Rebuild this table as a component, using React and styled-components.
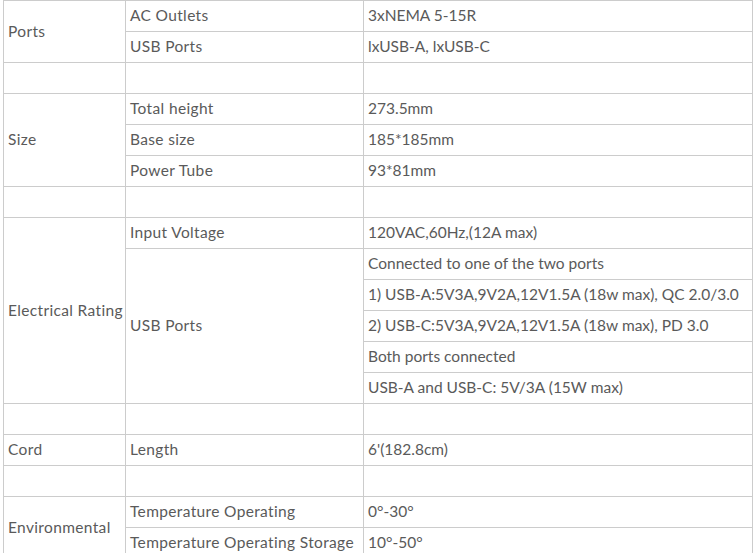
import React from 'react'
import styled, { createGlobalStyle } from 'styled-components'

const GlobalStyle = createGlobalStyle`
    body {
        margin: 0;
        background: #ffffff;
        font-family: Lato, "Open Sans", sans-serif;
    }
`;

const Page = styled.div`
    padding: 0 0 0 3px;
`;

const SpecTable = styled.table`
    width: 750px;
    border-collapse: collapse;
    table-layout: fixed;
    color: #5a5a5a;
    font-size: 15.5px;
`;

const Row = styled.tr`
    height: 31px;
`;

const Cell = styled.td`
    border: 1px solid #cccccc;
    padding: 0 4px 2px;
    vertical-align: middle;
    white-space: nowrap;
    line-height: 20px;
    letter-spacing: ${(p) => (p.$label ? '0.35px' : '0')};
`;

const specs = [
    {
        group: 'Ports',
        rows: [
            { label: 'AC Outlets', values: ['3xNEMA 5-15R'] },
            { label: 'USB Ports', values: ['lxUSB-A, lxUSB-C'] },
        ],
    },
    {
        group: 'Size',
        rows: [
            { label: 'Total height', values: ['273.5mm'] },
            { label: 'Base size', values: ['185*185mm'] },
            { label: 'Power Tube', values: ['93*81mm'] },
        ],
    },
    {
        group: 'Electrical Rating',
        rows: [
            { label: 'Input Voltage', values: ['120VAC,60Hz,(12A max)'] },
            {
                label: 'USB Ports',
                values: [
                    'Connected to one of the two ports',
                    '1) USB-A:5V3A,9V2A,12V1.5A (18w max), QC 2.0/3.0',
                    '2) USB-C:5V3A,9V2A,12V1.5A (18w max), PD 3.0',
                    'Both ports connected',
                    'USB-A and USB-C: 5V/3A (15W max)',
                ],
            },
        ],
    },
    {
        group: 'Cord',
        rows: [{ label: 'Length', values: ['6\'(182.8cm)'] }],
    },
    {
        group: 'Environmental',
        rows: [
            { label: 'Temperature Operating', values: ['0°-30°'] },
            { label: 'Temperature Operating Storage', values: ['10°-50°'] },
        ],
    },
];

function renderGroup(spec, index) {
    const span = spec.rows.reduce((n, r) => n + r.values.length, 0);
    const lines = [];
    spec.rows.forEach((row, ri) => {
        row.values.forEach((value, vi) => {
            lines.push(
                <Row key={`${index}-${ri}-${vi}`}>
                    {ri === 0 && vi === 0 && <Cell $label rowSpan={span}>{spec.group}</Cell>}
                    {vi === 0 && <Cell $label rowSpan={row.values.length}>{row.label}</Cell>}
                    <Cell>{value}</Cell>
                </Row>
            );
        });
    });
    return lines;
}

export default function App() {
    return (
        <Page>
            <GlobalStyle />
            <SpecTable>
                <colgroup>
                    <col style={{ width: '122px' }} />
                    <col style={{ width: '238px' }} />
                    <col />
                </colgroup>
                <tbody>
                    {specs.map((spec, i) => (
                        <React.Fragment key={spec.group}>
                            {i > 0 && (
                                <Row>
                                    <Cell />
                                    <Cell />
                                    <Cell />
                                </Row>
                            )}
                            {renderGroup(spec, i)}
                        </React.Fragment>
                    ))}
                </tbody>
            </SpecTable>
        </Page>
    )
}
